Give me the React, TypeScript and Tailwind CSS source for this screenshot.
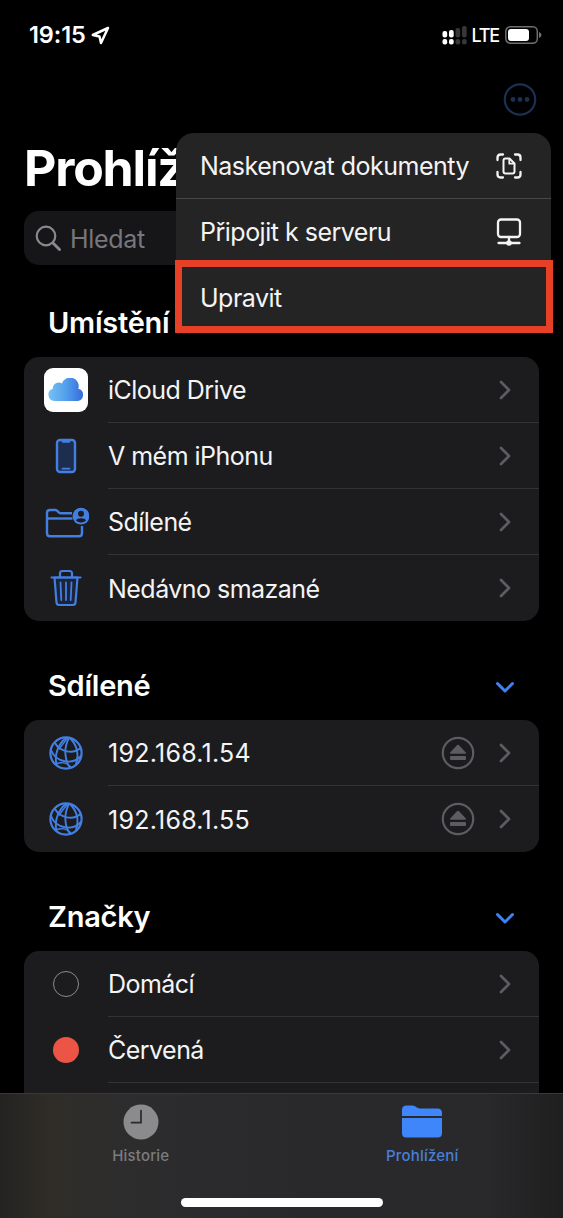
import React from 'react'

type RowProps = {
    icon: React.ReactNode
    label: string
    tracking?: string
    eject?: boolean
    last?: boolean
}

function Chevron() {
    return (
        <svg width="12" height="20" viewBox="0 0 12 20" fill="none" className="shrink-0">
            <path d="M2 2L10 10L2 18" stroke="#5d5d61" strokeWidth="2.7" strokeLinecap="round" strokeLinejoin="round" />
        </svg>
    )
}

function EjectIcon() {
    return (
        <svg width="34" height="34" viewBox="0 0 34 34" className="mr-[24px] shrink-0" fill="#5d5d61">
            <circle cx="17" cy="17" r="15.2" fill="none" stroke="#5d5d61" strokeWidth="2.2" />
            <path d="M16.2 9.1Q17 8.3 17.8 9.1L24.6 16.2Q25.5 17.7 24 17.8H10Q8.5 17.7 9.4 16.2Z" />
            <rect x="9" y="20" width="16" height="4" rx="1" />
        </svg>
    )
}

function CloudIcon() {
    return (
        <div className="flex h-[44px] w-[44px] items-center justify-center rounded-[9px] bg-white">
            <svg width="36" height="24" viewBox="0 0 36 24">
                <defs>
                    <linearGradient id="cloud" x1="0" y1="0" x2="1" y2="0">
                        <stop offset="0" stopColor="#76c1f4" />
                        <stop offset="0.5" stopColor="#53a0ec" />
                        <stop offset="1" stopColor="#356bdd" />
                    </linearGradient>
                </defs>
                <path
                    d="M6.500 23A6.300 6.300 0 0 1 4.800 10.700A6 6 0 0 1 14 5.500A8.300 8.300 0 0 1 30.300 10.700A6.300 6.300 0 0 1 30 23Z"
                    fill="url(#cloud)"
                />
            </svg>
        </div>
    )
}

function PhoneIcon() {
    return (
        <svg width="22" height="36" viewBox="0 0 22 36" fill="none" stroke="#437fe2">
            <rect x="2" y="2" width="18" height="32" rx="3" fill="#1d2d4d" strokeWidth="2.4" />
            <path d="M8 3.5H14" strokeWidth="2.4" strokeLinecap="round" />
            <path d="M7.5 30.7H14.5" strokeWidth="1.7" strokeLinecap="round" />
        </svg>
    )
}

function SharedFolderIcon() {
    return (
        <svg width="46" height="34" viewBox="0 0 46 34" fill="none" stroke="#437fe2" strokeWidth="2.4">
            <path
                d="M29 8.2H17.5C15.5 8.2 14.5 5 12.5 5H7Q4 5 4 8V28.300Q4 31.300 7 31.300H36Q39 31.300 39 28.300V21"
                strokeLinejoin="round"
            />
            <path d="M4 13.5H29.500" />
            <circle cx="38" cy="11.200" r="8.400" fill="#437fe2" stroke="none" />
            <circle cx="38" cy="8.800" r="3" fill="#1c1c1e" stroke="none" />
            <path d="M33 15.600Q34 13.300 38 13.300T43 15.600Q41 17.600 38 17.600T33 15.600Z" fill="#1c1c1e" stroke="none" />
        </svg>
    )
}

function TrashIcon() {
    return (
        <svg width="34" height="38" viewBox="0 0 34 38" fill="none" stroke="#437fe2" strokeWidth="2.2" strokeLinecap="round" strokeLinejoin="round">
            <path d="M5.5 8.5L7.5 33.5Q7.7 36 10.2 36H23.8Q26.3 36 26.5 33.5L28.5 8.5Z" fill="#1b2438" />
            <path d="M2.5 8.5H31.5" />
            <path d="M11 8V4.5Q11 2 13.5 2H20.5Q23 2 23 4.5V8" />
            <path d="M11.5 13.5L12.3 31M17 13.5V31M22.5 13.5L21.7 31" strokeWidth="1.8" />
        </svg>
    )
}

function GlobeIcon() {
    return (
        <svg width="34" height="34" viewBox="0 0 34 34" fill="none" stroke="#437fe2" strokeWidth="1.9" strokeLinecap="round">
            <circle cx="17" cy="17" r="15.6" strokeWidth="2.2" />
            <path d="M17 2C10 7 5 18 7.500 28.500" />
            <path d="M20 2C14.500 12 15.500 24 21 32" />
            <path d="M21.500 2.500C28 9.500 30 19 27 28" />
            <path d="M6 7C11 16 24 18.500 31.500 12" />
            <path d="M2 14C7 27 24 29 32 20" />
            <path d="M7 28C12 25.500 18 26.500 22 31" strokeWidth="1.5" />
            <path d="M18.500 2L10 13" strokeWidth="1.5" />
        </svg>
    )
}

function Row({ icon, label, tracking = 'tracking-[-0.53px]', eject, last }: RowProps) {
    return (
        <div className="flex h-[66px] shrink-0">
            <div className="flex w-[84px] items-center justify-center">{icon}</div>
            <div className={`flex flex-1 items-center pr-[28px] ${last ? '' : 'border-b border-[#333336]'}`}>
                <span className={`flex-1 whitespace-nowrap pt-[3px] text-[25px] text-[#f4f4f5] ${tracking}`}>{label}</span>
                {eject && <EjectIcon />}
                <Chevron />
            </div>
        </div>
    )
}

function SectionHeader({ title, chevron }: { title: string; chevron?: boolean }) {
    return (
        <div className="flex h-[68px] shrink-0 items-center justify-between pl-[24px] pr-[24px]">
            <h2 className="text-[29px] font-semibold tracking-[-0.25px]">{title}</h2>
            {chevron && (
                <svg width="20" height="13" viewBox="0 0 20 13" fill="none" className="mt-[2px]">
                    <path d="M2.5 2.5L10 10L17.5 2.5" stroke="#3f82f3" strokeWidth="3" strokeLinecap="round" strokeLinejoin="round" />
                </svg>
            )}
        </div>
    )
}

function Card({ children }: { children: React.ReactNode }) {
    return <div className="flex shrink-0 flex-col overflow-hidden rounded-[15px] bg-[#1c1c1e]">{children}</div>
}

function StatusBar() {
    return (
        <div className="flex h-[70px] shrink-0 items-center justify-between pl-[29px] pr-[21px]">
            <div className="flex items-center gap-[5px]">
                <span className="text-[23.5px] font-semibold tracking-[-0.1px]">19:15</span>
                <svg width="19" height="19" viewBox="0 0 19 19" fill="none">
                    <path d="M17 2L1.8 9L8.5 10.5L10 17Z" stroke="white" strokeWidth="2.5" strokeLinejoin="round" />
                </svg>
            </div>
            <div className="flex items-center">
                <svg width="25" height="19" viewBox="0 0 25 19" fill="white">
                    <rect x="0.500" y="5" width="4.700" height="6.500" rx="2" />
                    <rect x="7" y="4" width="4.700" height="7.500" rx="2" />
                    <rect x="13.500" y="2" width="4.700" height="9.500" rx="2" fill="#37373a" />
                    <rect x="20" y="0" width="4.700" height="11.500" rx="2" fill="#37373a" />
                    <rect x="0.500" y="13" width="4.700" height="5.500" rx="2" />
                    <rect x="7" y="13" width="4.700" height="5.500" rx="2" />
                    <rect x="13.500" y="13" width="4.700" height="5.500" rx="2" fill="#37373a" />
                    <rect x="20" y="13" width="4.700" height="5.500" rx="2" fill="#37373a" />
                </svg>
                <span className="ml-[5px] text-[18px] font-medium tracking-[-1.2px]">LTE</span>
                <svg width="37" height="18" viewBox="0 0 37 18" className="ml-[6px]">
                    <rect x="0.8" y="0.8" width="31.5" height="16.400" rx="4.5" fill="none" stroke="#6f6f72" strokeWidth="1.5" />
                    <rect x="3" y="3" width="21" height="12" rx="3" fill="white" />
                    <path d="M34 6V12Q36.5 11 36.5 9T34 6Z" fill="#6f6f72" />
                </svg>
            </div>
        </div>
    )
}

function ContextMenu() {
    return (
        <div className="absolute left-[176px] top-[133px] w-[375px]">
            <div className="overflow-hidden rounded-[18px] bg-[#242425] text-[25px] tracking-[-0.5px] text-[#f4f4f5]">
                <div className="flex h-[66px] items-center justify-between border-b border-[#48484a] pl-[24px] pr-[28px]">
                    <span className="whitespace-nowrap pt-[2px]">Naskenovat dokumenty</span>
                    <svg width="28" height="28" viewBox="0 0 28 28" fill="none" stroke="#f4f4f5" strokeWidth="2.3" strokeLinecap="round" strokeLinejoin="round">
                        <path d="M2.500 8V5.500Q2.500 2.500 5.500 2.500H8M20 2.500H22.500Q25.500 2.500 25.500 5.500V8M25.500 20V22.500Q25.500 25.500 22.500 25.500H20M8 25.500H5.500Q2.500 25.500 2.500 22.500V20" />
                        <path d="M10.500 6.500H14.500L19.500 11.500V19.500Q19.500 21.500 17.500 21.500H10.500Q8.500 21.500 8.500 19.500V8.500Q8.500 6.500 10.500 6.500Z" strokeWidth="2" />
                        <path d="M14.300 7V11.700H19" strokeWidth="1.800" />
                    </svg>
                </div>
                <div className="flex h-[66px] items-center justify-between pl-[24px] pr-[28px]">
                    <span className="pt-[2px]">Připojit k serveru</span>
                    <svg width="28" height="30" viewBox="0 0 28 30" fill="none" stroke="#f4f4f5" strokeWidth="2.3" strokeLinecap="round">
                        <rect x="3" y="2.5" width="22" height="17.500" rx="3" />
                        <path d="M14 20V26M3.5 26H24.5" />
                        <circle cx="14" cy="26" r="2.8" fill="#f4f4f5" stroke="none" />
                    </svg>
                </div>
                <div className="flex h-[66px] items-center pl-[24px]">
                    <span className="pt-[1px]">Upravit</span>
                </div>
            </div>
            <div className="absolute -left-px top-[127px] h-[73px] w-[378px] border-[7px] border-[#e64027]" />
        </div>
    )
}

function TabBar() {
    return (
        <div className="relative flex h-[125px] shrink-0 border-t border-[#39393a] bg-[linear-gradient(90deg,#242321_0%,#302d28_9%,#2e2d2c_18%,#2c2c2e_28%,#29292b_55%,#29292b_86%,#1f1f20_100%)]">
            <div className="flex w-1/2 flex-col items-center pt-[10px]">
                <svg width="36" height="36" viewBox="0 0 36 36">
                    <circle cx="18" cy="18" r="17.5" fill="#8b8b8d" />
                    <path d="M18 6.500V18.7H8.5" fill="none" stroke="#2a2a2b" strokeWidth="1.7" strokeLinecap="round" />
                </svg>
                <span className="mt-[5px] text-[15px] font-medium leading-[22px] tracking-[0.2px] text-[#7c7c7e]">Historie</span>
            </div>
            <div className="flex w-1/2 flex-col items-center pt-[10px]">
                <svg width="40" height="36" viewBox="0 0 40 36" fill="#3f86fa">
                    <path d="M0 12V6Q0 1.5 4.5 1.5H10.5C14 1.5 14.5 4.5 18 4.5H35.5Q40 4.5 40 9V12Z" />
                    <path d="M0 14H40V29Q40 33.5 35.5 33.5H4.5Q0 33.5 0 29Z" />
                </svg>
                <span className="mt-[5px] text-[15px] font-medium leading-[22px] tracking-[0.2px] text-[#4a7fd8]">Prohlížení</span>
            </div>
            <div className="absolute bottom-[11px] left-[181px] h-[9px] w-[202px] rounded-full bg-white" />
        </div>
    )
}

export default function App() {
    return (
        <div className="relative flex h-[1218px] w-[563px] flex-col overflow-hidden bg-black font-['Inter',sans-serif] text-white">
            <StatusBar />
            <div className="flex min-h-0 flex-1 flex-col overflow-hidden px-[24px]">
                <div className="flex h-[59px] shrink-0 items-center justify-end pr-[2px]">
                    <svg width="34" height="34" viewBox="0 0 34 34" fill="#1b3153">
                        <circle cx="17" cy="16.500" r="15.200" fill="none" stroke="#1b3153" strokeWidth="2.2" />
                        <circle cx="10" cy="16.500" r="2.400" />
                        <circle cx="17" cy="16.500" r="2.400" />
                        <circle cx="24" cy="16.500" r="2.400" />
                    </svg>
                </div>
                <h1 className="flex h-[82px] shrink-0 items-center pb-[4px] text-[50px] font-bold tracking-[-1.2px]">Prohlížení</h1>
                <div className="flex h-[54px] shrink-0 items-center rounded-[15px] bg-[#161618] pl-[11px] text-[25px] text-[#77777b]">
                    <svg width="28" height="28" viewBox="0 0 28 28" fill="none" stroke="#8a8a8e" strokeLinecap="round">
                        <circle cx="11" cy="12" r="9.3" strokeWidth="2.2" />
                        <path d="M18 19L24.5 25.5" strokeWidth="2.9" />
                    </svg>
                    <span className="ml-[7px] pt-[3px] tracking-[-0.3px]">Hledat</span>
                </div>

                <div className="h-[24px] shrink-0" />
                <SectionHeader title="Umístění" />
                <Card>
                    <Row icon={<CloudIcon />} label="iCloud Drive" />
                    <Row icon={<PhoneIcon />} label="V mém iPhonu" />
                    <Row icon={<SharedFolderIcon />} label="Sdílené" />
                    <Row icon={<TrashIcon />} label="Nedávno smazané" last />
                </Card>

                <div className="h-[31px] shrink-0" />
                <SectionHeader title="Sdílené" chevron />
                <Card>
                    <Row icon={<GlobeIcon />} label="192.168.1.54" tracking="tracking-[0.25px]" eject />
                    <Row icon={<GlobeIcon />} label="192.168.1.55" tracking="tracking-[0.25px]" eject last />
                </Card>

                <div className="h-[31px] shrink-0" />
                <SectionHeader title="Značky" chevron />
                <Card>
                    <Row icon={<div className="h-[26px] w-[26px] rounded-full border-[1.5px] border-[#8a8a8e]" />} label="Domácí" />
                    <Row icon={<div className="h-[26px] w-[26px] rounded-full bg-[#ec5545]" />} label="Červená" />
                    <div className="h-[66px] shrink-0" />
                </Card>
            </div>
            <TabBar />
            <ContextMenu />
        </div>
    )
}
